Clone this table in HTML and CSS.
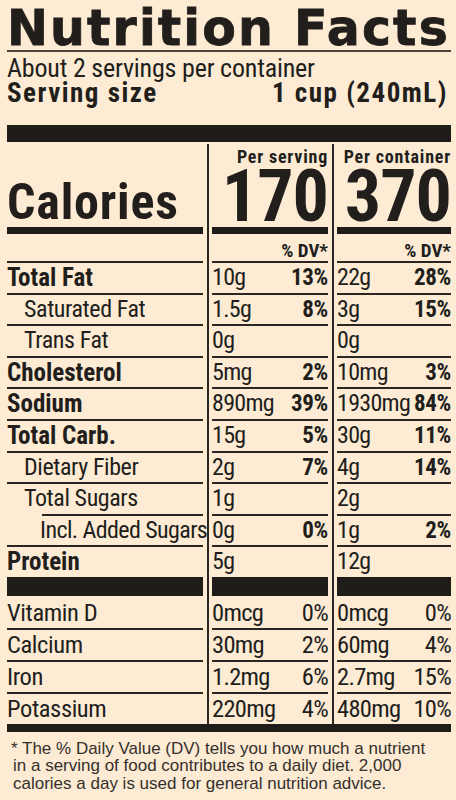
FILE: index.html
```html
<!DOCTYPE html>
<html>
<head>
    <meta charset="UTF-8">
    <title>Nutrition Facts</title>
    <link rel="stylesheet" href="styles.css">
</head>
<body>
    <div class="label">
        <h1 class="title">Nutrition Facts</h1>
        <p class="servings">About 2 servings per container</p>
        <div class="serving-size">
            <span>Serving size</span>
            <span>1 cup (240mL)</span>
        </div>
        <div class="bar-thick"></div>

        <div class="facts">
            <div class="sep"></div>
            <div class="sep sep-2"></div>

            <div class="trio">
                <div class="cal-name">Calories</div>
                <div class="cal-col">
                    <div class="per">Per serving</div>
                    <div class="cal-num">170</div>
                </div>
                <div class="cal-col">
                    <div class="per">Per container</div>
                    <div class="cal-num">370</div>
                </div>
            </div>

            <div class="trio">
                <div class="dv"></div>
                <div class="dv">% DV*</div>
                <div class="dv">% DV*</div>
            </div>

            <div class="trio row">
                <div class="name bold">Total Fat</div>
                <div class="val"><span>10g</span><b>13%</b></div>
                <div class="val"><span>22g</span><b>28%</b></div>
            </div>
            <div class="trio row">
                <div class="name sub">Saturated Fat</div>
                <div class="val"><span>1.5g</span><b>8%</b></div>
                <div class="val"><span>3g</span><b>15%</b></div>
            </div>
            <div class="trio row">
                <div class="name sub">Trans Fat</div>
                <div class="val"><span>0g</span></div>
                <div class="val"><span>0g</span></div>
            </div>
            <div class="trio row">
                <div class="name bold">Cholesterol</div>
                <div class="val"><span>5mg</span><b>2%</b></div>
                <div class="val"><span>10mg</span><b>3%</b></div>
            </div>
            <div class="trio row">
                <div class="name bold">Sodium</div>
                <div class="val"><span>890mg</span><b>39%</b></div>
                <div class="val"><span>1930mg</span><b>84%</b></div>
            </div>
            <div class="trio row">
                <div class="name bold">Total Carb.</div>
                <div class="val"><span>15g</span><b>5%</b></div>
                <div class="val"><span>30g</span><b>11%</b></div>
            </div>
            <div class="trio row">
                <div class="name sub">Dietary Fiber</div>
                <div class="val"><span>2g</span><b>7%</b></div>
                <div class="val"><span>4g</span><b>14%</b></div>
            </div>
            <div class="trio row">
                <div class="name sub sugars">Total Sugars</div>
                <div class="val"><span>1g</span></div>
                <div class="val"><span>2g</span></div>
            </div>
            <div class="trio row">
                <div class="name subsub">Incl. Added Sugars</div>
                <div class="val"><span>0g</span><b>0%</b></div>
                <div class="val"><span>1g</span><b>2%</b></div>
            </div>
            <div class="trio row last">
                <div class="name bold">Protein</div>
                <div class="val"><span>5g</span></div>
                <div class="val"><span>12g</span></div>
            </div>

            <div class="trio bars">
                <div></div>
                <div></div>
                <div></div>
            </div>

            <div class="trio row vit first">
                <div class="name">Vitamin D</div>
                <div class="val"><span>0mcg</span><span>0%</span></div>
                <div class="val"><span>0mcg</span><span>0%</span></div>
            </div>
            <div class="trio row vit">
                <div class="name">Calcium</div>
                <div class="val"><span>30mg</span><span>2%</span></div>
                <div class="val"><span>60mg</span><span>4%</span></div>
            </div>
            <div class="trio row vit">
                <div class="name">Iron</div>
                <div class="val"><span>1.2mg</span><span>6%</span></div>
                <div class="val"><span>2.7mg</span><span>15%</span></div>
            </div>
            <div class="trio row vit last">
                <div class="name">Potassium</div>
                <div class="val"><span>220mg</span><span>4%</span></div>
                <div class="val"><span>480mg</span><span>10%</span></div>
            </div>
        </div>

        <div class="bar-bottom"></div>
        <p class="footnote">* The % Daily Value (DV) tells you how much a nutrient in a serving of food contributes to a daily diet. 2,000 calories a day is used for general nutrition advice.</p>
    </div>
</body>
</html>
```

FILE: styles.css
```css
body {
    margin: 0;
    background: #fdebd4;
    color: #211e1c;
    font-family: Roboto, "Liberation Sans", sans-serif;
    font-stretch: 75%;
}
.label {
    padding: 0 5px 0 7px;
}
.title {
    height: 50px;
    margin: 0;
    font-family: "DejaVu Sans", sans-serif;
    font-stretch: normal;
    font-weight: bold;
    font-size: 49px;
    line-height: 57px;
    letter-spacing: 2.1px;
    white-space: nowrap;
    -webkit-text-stroke: 0.8px #211e1c;
    border-bottom: 2px solid #4d453c;
}
.servings {
    margin: 3px 0 0;
    font-size: 26px;
    line-height: 26px;
    letter-spacing: -0.2px;
}
.serving-size {
    display: flex;
    justify-content: space-between;
    padding-right: 3px;
    font-weight: bold;
    font-size: 27px;
    line-height: 24px;
    letter-spacing: 1.5px;
}
.bar-thick {
    height: 17px;
    margin-top: 20px;
    background: #1f1c1a;
}

/* three columns split by two thin rules */
.facts {
    display: grid;
    grid-template-columns: 196px 9px 116px 9px 114px;
    margin-top: 2px;
}
.sep {
    grid-column: 2;
    grid-row: 1 / span 17;
    background: linear-gradient(#2a2622, #2a2622) no-repeat center / 2px 100%;
}
.sep-2 {
    grid-column: 4;
}
.trio {
    display: contents;
}
.trio > :nth-child(1) { grid-column: 1; }
.trio > :nth-child(2) { grid-column: 3; }
.trio > :nth-child(3) { grid-column: 5; }

.cal-name {
    display: flex;
    align-items: flex-end;
    height: 90px;
    box-sizing: border-box;
    border-bottom: 7px solid #1f1c1a;
    font-weight: bold;
    font-size: 50px;
    line-height: 50px;
    letter-spacing: 0.8px;
}
.cal-col {
    height: 90px;
    box-sizing: border-box;
    padding-top: 3px;
    border-bottom: 7px solid #1f1c1a;
    text-align: right;
    font-weight: bold;
}
.per {
    font-size: 18px;
    line-height: 20px;
    letter-spacing: 0.8px;
}
.cal-num {
    font-size: 72px;
    line-height: 60px;
    letter-spacing: -1px;
}
.dv {
    height: 29px;
    box-sizing: border-box;
    padding-top: 6px;
    border-bottom: 2px solid #2a2622;
    text-align: right;
    font-weight: bold;
    font-size: 19px;
    line-height: 21px;
}

.row > div {
    height: 31.6px;
    box-sizing: border-box;
    border-bottom: 2px solid #2a2622;
    font-size: 24px;
    line-height: 29.6px;
    white-space: nowrap;
}
.row.last > div {
    height: 29.6px;
    border-bottom: 0;
}
.name {
    letter-spacing: -0.4px;
}
.name.bold {
    font-weight: bold;
    font-size: 25px;
    letter-spacing: 0;
}
.name.sub {
    padding-left: 17px;
}
.name.subsub {
    padding-left: 33px;
    letter-spacing: -0.6px;
}
.name.sugars {
    border-bottom-color: transparent;
    background: linear-gradient(#2a2622, #2a2622) left 35px bottom 0 / calc(100% - 35px) 2px no-repeat border-box;
}
.val {
    display: flex;
    justify-content: space-between;
    align-items: baseline;
    gap: 3px;
}
.val span {
    letter-spacing: -0.7px;
}
.val b {
    font-size: 23px;
    letter-spacing: -0.3px;
}
.bars > div {
    height: 19px;
    background: #1f1c1a;
}

.row.vit > div {
    height: 32px;
    font-size: 24.5px;
    line-height: 30px;
}
.row.vit.first > div {
    height: 34px;
    padding-top: 2px;
}
.row.vit.last > div {
    height: 30px;
}

.bar-bottom {
    height: 8px;
    background: #1f1c1a;
}
.footnote {
    margin: 8px 0 0;
    padding: 0 8px 0 6px;
    text-indent: -2px;
    font-family: "Liberation Sans", Arial, sans-serif;
    font-stretch: normal;
    font-size: 17px;
    line-height: 17.5px;
    color: #34302c;
}
```
